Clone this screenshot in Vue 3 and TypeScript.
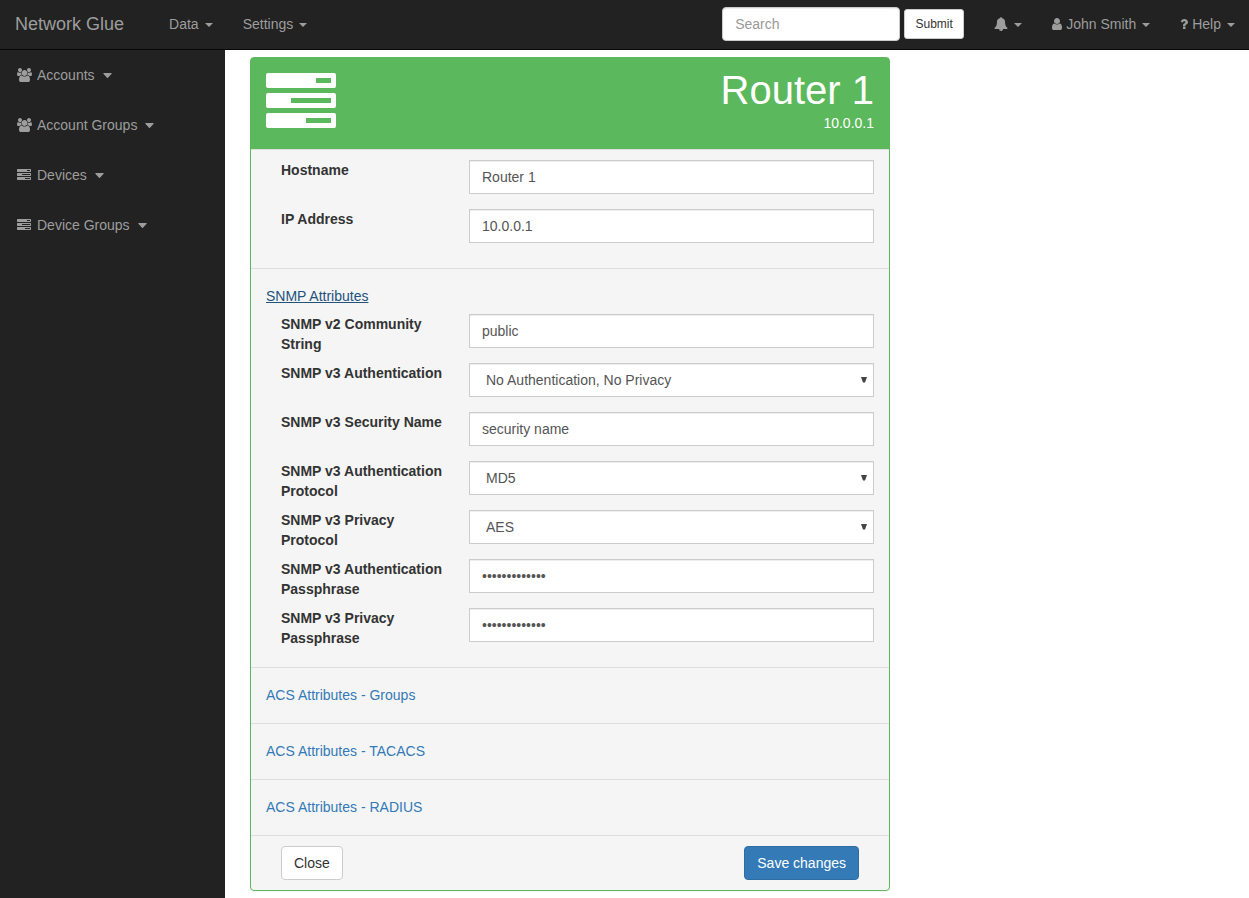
<script setup lang="ts">
import { reactive, ref } from 'vue'

interface Field {
  id: string
  label: string
  kind: 'text' | 'password' | 'select'
  options?: string[]
}

interface MenuItem {
  label: string
  icon: 'users' | 'server'
}

const leftMenus: string[] = ['Data', 'Settings']

const sideMenus: MenuItem[] = [
  { label: 'Accounts', icon: 'users' },
  { label: 'Account Groups', icon: 'users' },
  { label: 'Devices', icon: 'server' },
  { label: 'Device Groups', icon: 'server' },
]

const basicFields: Field[] = [
  { id: 'hostname', label: 'Hostname', kind: 'text' },
  { id: 'ip', label: 'IP Address', kind: 'text' },
]

const snmpFields: Field[] = [
  { id: 'community', label: 'SNMP v2 Community String', kind: 'text' },
  {
    id: 'authLevel',
    label: 'SNMP v3 Authentication',
    kind: 'select',
    options: ['No Authentication, No Privacy', 'Authentication, No Privacy', 'Authentication, Privacy'],
  },
  { id: 'securityName', label: 'SNMP v3 Security Name', kind: 'text' },
  { id: 'authProtocol', label: 'SNMP v3 Authentication Protocol', kind: 'select', options: ['MD5', 'SHA'] },
  { id: 'privProtocol', label: 'SNMP v3 Privacy Protocol', kind: 'select', options: ['AES', 'DES'] },
  { id: 'authPass', label: 'SNMP v3 Authentication Passphrase', kind: 'password' },
  { id: 'privPass', label: 'SNMP v3 Privacy Passphrase', kind: 'password' },
]

const groups: { id: string; title: string; fields: Field[] }[] = [
  { id: 'basic', title: '', fields: basicFields },
  { id: 'snmp', title: 'SNMP Attributes', fields: snmpFields },
]

const acsSections: string[] = ['ACS Attributes - Groups', 'ACS Attributes - TACACS', 'ACS Attributes - RADIUS']

const form = reactive<Record<string, string>>({
  hostname: 'Router 1',
  ip: '10.0.0.1',
  community: 'public',
  authLevel: 'No Authentication, No Privacy',
  securityName: 'security name',
  authProtocol: 'MD5',
  privProtocol: 'AES',
  authPass: 'authpassword1',
  privPass: 'privpassword1',
})

const search = ref('')

const serverPath =
  'M.4 0h13.2a.4.4 0 0 1 .4.4v2.2a.4.4 0 0 1-.4.4H.4a.4.4 0 0 1-.4-.4V.4A.4.4 0 0 1 .4 0zM10 1v1h3V1z' +
  'M.4 4h13.2a.4.4 0 0 1 .4.4v2.2a.4.4 0 0 1-.4.4H.4a.4.4 0 0 1-.4-.4V4.4A.4.4 0 0 1 .4 4zM5 5v1h8V5z' +
  'M.4 8h13.2a.4.4 0 0 1 .4.4v2.2a.4.4 0 0 1-.4.4H.4a.4.4 0 0 1-.4-.4V8.4A.4.4 0 0 1 .4 8zM8 9v1h5V9z'
</script>

<template>
  <div class="page">
    <header class="navbar">
      <a class="brand" href="#">Network Glue</a>
      <nav class="nav">
        <button v-for="m in leftMenus" :key="m" type="button" class="nav-link">
          {{ m }}<span class="caret"></span>
        </button>
      </nav>
      <form class="search" @submit.prevent>
        <input v-model="search" class="search-box" type="text" placeholder="Search" aria-label="Search" />
        <button class="btn btn-small" type="submit">Submit</button>
      </form>
      <nav class="nav">
        <button type="button" class="nav-link" aria-label="Notifications">
          <svg class="icon" width="14" height="14" viewBox="0 0 1792 1792" aria-hidden="true">
            <path d="M912 1696q0-16-16-16-59 0-101.500-42.500t-42.500-101.500q0-16-16-16t-16 16q0 73 51.500 124.500t124.500 51.500q16 0 16-16zm816-288q0 52-38 90t-90 38h-448q0 106-75 181t-181 75-181-75-75-181h-448q-52 0-90-38t-38-90q50-42 91-88t85-119.500 74.500-158.500 50-206 19.500-260q0-152 117-282.500t307-158.500q-8-19-8-39 0-40 28-68t68-28 68 28 28 68q0 20-8 39 190 28 307 158.500t117 282.500q0 139 19.500 260t50 206 74.500 158.500 85 119.500 91 88z" />
          </svg>
          <span class="caret"></span>
        </button>
        <button type="button" class="nav-link">
          <svg class="icon icon-gap" width="10" height="14" viewBox="256 0 1280 1792" aria-hidden="true">
            <path d="M1536 1399q0 109-62.500 187t-150.500 78h-854q-88 0-150.500-78t-62.500-187q0-85 8.500-160.500t31.500-152 58.500-131 94-89 134.500-34.500q131 128 313 128t313-128q76 0 134.500 34.500t94 89 58.500 131 31.500 152 8.500 160.500zm-256-887q0 159-112.500 271.500t-271.500 112.500-271.500-112.500-112.500-271.500 112.500-271.500 271.500-112.500 271.500 112.500 112.500 271.500z" />
          </svg>
          John Smith<span class="caret"></span>
        </button>
        <button type="button" class="nav-link">
          <svg class="icon icon-gap" width="8" height="14" viewBox="384 0 1024 1792" aria-hidden="true">
            <path d="M1088 1256v240q0 16-12 28t-28 12h-240q-16 0-28-12t-12-28v-240q0-16 12-28t28-12h240q16 0 28 12t12 28zm316-600q0 54-15.500 101t-35 76.500-55 59.500-57.500 43.500-61 35.500q-41 23-68.500 65t-27.500 67q0 17-12 32.500t-28 15.500h-240q-15 0-25.500-18.500t-10.500-37.500v-45q0-83 65-156.500t143-108.500q59-27 84-56t25-76q0-42-46.500-74t-107.500-32q-65 0-108 29-35 25-107 115-13 16-31 16-12 0-25-8l-164-125q-13-10-15.500-25t5.500-28q160-266 464-266 80 0 161 31t146 83 106 127.500 41 158.500z" />
          </svg>
          Help<span class="caret"></span>
        </button>
      </nav>
    </header>

    <div class="body">
      <aside class="sidebar">
        <button v-for="m in sideMenus" :key="m.label" type="button" class="side-link">
          <span class="side-icon">
            <svg v-if="m.icon === 'users'" width="15" height="14" viewBox="64 0 1920 1792" aria-hidden="true">
              <path d="M657 896q-162 5-265 128h-134q-82 0-138-40.500t-56-118.500q0-353 124-353 6 0 43.500 21t97.500 42.500 119 21.500q67 0 133-23-5 37-5 66 0 139 81 256zm1071 637q0 120-73 189.500t-194 69.500h-874q-121 0-194-69.500t-73-189.500q0-53 3.500-103.500t14-109 26.500-108.500 43-97.500 62-81 85.500-53.500 111.500-20q10 0 43 21.500t73 48 107 48 135 21.500 135-21.500 107-48 73-48 43-21.500q61 0 111.500 20t85.500 53.500 62 81 43 97.500 26.500 108.500 14 109 3.500 103.500zm-1024-1277q0 106-75 181t-181 75-181-75-75-181 75-181 181-75 181 75 75 181zm704 384q0 159-112.500 271.500t-271.500 112.500-271.500-112.500-112.500-271.500 112.500-271.500 271.500-112.500 271.500 112.500 112.500 271.500zm576 225q0 78-56 118.500t-138 40.500h-134q-103-123-265-128 81-117 81-256 0-29-5-66 66 23 133 23 59 0 119-21.500t97.500-42.500 43.500-21q124 0 124 353zm-128-609q0 106-75 181t-181 75-181-75-75-181 75-181 181-75 181 75 75 181z" />
            </svg>
            <svg v-else width="14" height="14" viewBox="0 -1 14 14" aria-hidden="true">
              <path fill-rule="evenodd" :d="serverPath" />
            </svg>
          </span>
          {{ m.label }}
          <svg class="side-caret" width="9" height="5" viewBox="0 0 9 5" aria-hidden="true">
            <path d="M.6 0h7.800q.5.200.2.700L5 4.700q-.5.400-1 0L.4.700Q.1.200.6 0z" />
          </svg>
        </button>
      </aside>

      <main class="content">
        <form class="card" @submit.prevent>
          <div class="card-head">
            <svg class="device-icon" width="70" height="55" viewBox="0 0 14 11" aria-hidden="true">
              <path fill-rule="evenodd" :d="serverPath" />
            </svg>
            <div class="device-name">
              <h1>Router 1</h1>
              <div>10.0.0.1</div>
            </div>
          </div>

          <section v-for="g in groups" :key="g.id" class="group" :class="{ titled: g.title }">
            <a v-if="g.title" class="group-link open" href="#">{{ g.title }}</a>
            <div v-for="f in g.fields" :key="f.id" class="field">
              <label :for="f.id">{{ f.label }}</label>
              <div v-if="f.kind === 'select'" class="select-wrap">
                <select :id="f.id" v-model="form[f.id]" class="control">
                  <option v-for="o in f.options" :key="o" :value="o">{{ o }}</option>
                </select>
                <svg class="select-arrow" width="6" height="6" viewBox="0 0 6 6" aria-hidden="true">
                  <path d="M0 0h6L4 5.500H2z" />
                </svg>
              </div>
              <input
                v-else
                :id="f.id"
                v-model="form[f.id]"
                class="control"
                :type="f.kind"
                autocomplete="off"
              />
            </div>
          </section>

          <section v-for="s in acsSections" :key="s" class="group collapsed">
            <a class="group-link" href="#">{{ s }}</a>
          </section>

          <footer class="card-foot">
            <button type="button" class="btn">Close</button>
            <button type="submit" class="btn btn-primary">Save changes</button>
          </footer>
        </form>
      </main>
    </div>
  </div>
</template>

<style>
body {
  margin: 0;
  background: #fff;
}
</style>

<style scoped>
.page,
.page * {
  box-sizing: border-box;
}

.page {
  display: flex;
  flex-direction: column;
  min-height: 100vh;
  font-family: "Liberation Sans", Arial, sans-serif;
  font-size: 14px;
  line-height: 20px;
  color: #333;
}

button,
input,
select {
  margin: 0;
  font-family: inherit;
  font-size: 14px;
  line-height: 20px;
}

button {
  cursor: pointer;
}

svg {
  display: block;
  fill: currentColor;
}

.navbar {
  display: flex;
  align-items: flex-start;
  background: #222;
  border-bottom: 1px solid #080808;
  color: #9d9d9d;
}

.brand {
  padding: 14px 15px 15px;
  margin-right: 15px;
  font-size: 18px;
  line-height: 20px;
  color: inherit;
  text-decoration: none;
  white-space: nowrap;
}

.nav {
  display: flex;
}

.nav-link {
  display: flex;
  align-items: center;
  padding: 14px 15px 15px;
  border: 0;
  background: none;
  color: inherit;
  white-space: nowrap;
}

.search + .nav .nav-link:last-child {
  padding-right: 14px;
}

.icon-gap {
  margin-right: 4px;
}

.caret {
  margin: 2px 0 0 6px;
  border-top: 4px solid;
  border-right: 4px solid transparent;
  border-left: 4px solid transparent;
}

.search {
  display: flex;
  align-items: center;
  gap: 4px;
  margin-left: auto;
  padding: 7px 15px 0;
}

.search-box {
  width: 178px;
  height: 34px;
  padding: 6px 12px;
  border: 1px solid #ccc;
  border-radius: 4px;
  background: #fff;
  box-shadow: inset 0 1px 1px rgba(0, 0, 0, 0.075);
  color: #555;
}

.search-box::placeholder {
  color: #999;
  opacity: 1;
}

.btn {
  padding: 6px 12px;
  border: 1px solid #ccc;
  border-radius: 4px;
  background: #fff;
  color: #333;
}

.btn-small {
  min-width: 60px;
  padding: 5px 10px;
  border-radius: 3px;
  font-size: 12px;
  line-height: 18px;
}

.btn-primary {
  border-color: #2e6da4;
  background: #337ab7;
  color: #fff;
}

.body {
  display: flex;
  flex: 1;
}

.sidebar {
  display: flex;
  flex-direction: column;
  flex: 0 0 225px;
  background: #222;
  color: #9d9d9d;
}

.side-link {
  display: flex;
  align-items: center;
  padding: 15px;
  border: 0;
  background: none;
  color: inherit;
  text-align: left;
}

.side-icon {
  display: flex;
  justify-content: center;
  width: 18px;
  margin-right: 4px;
}

.side-caret {
  margin-left: 8px;
}

.content {
  flex: 1;
  min-width: 0;
  padding: 7px 25px;
}

.card {
  max-width: 640px;
  border: 1px solid #5cb85c;
  border-radius: 4px;
  background: #f5f5f5;
  box-shadow: 0 1px 1px rgba(0, 0, 0, 0.05);
}

.card-head {
  display: flex;
  justify-content: space-between;
  padding: 10px 15px 16px;
  background: #5cb85c;
  color: #fff;
}

.device-icon {
  margin-top: 5px;
}

.device-name {
  text-align: right;
}

.device-name h1 {
  margin: 0;
  font-size: 40px;
  font-weight: 400;
  line-height: 45px;
}

.group {
  padding: 10px 15px;
  border-top: 1px solid #ddd;
}

.group.titled {
  padding-top: 17px;
}

.group.collapsed {
  padding: 17px 15px 18px;
}

.group-link {
  display: table;
  color: #337ab7;
  text-decoration: none;
}

.group-link.open {
  margin-bottom: 8px;
  color: #23527c;
  text-decoration: underline;
}

.field {
  display: grid;
  grid-template-columns: 173px 1fr;
  column-gap: 15px;
  height: 34px;
  margin-bottom: 15px;
  padding-left: 15px;
}

.field label {
  font-weight: 700;
}

.control {
  display: block;
  width: 100%;
  height: 34px;
  padding: 6px 12px;
  border: 1px solid #ccc;
  border-radius: 0;
  background: #fff;
  box-shadow: inset 0 1px 1px rgba(0, 0, 0, 0.075);
  color: #555;
}

.select-wrap {
  position: relative;
}

select.control {
  appearance: none;
  padding-left: 16px;
}

.select-arrow {
  position: absolute;
  top: 14px;
  right: 7px;
  color: #444;
  pointer-events: none;
}

.card-foot {
  display: flex;
  justify-content: space-between;
  padding: 10px 30px;
  border-top: 1px solid #ddd;
}
</style>
